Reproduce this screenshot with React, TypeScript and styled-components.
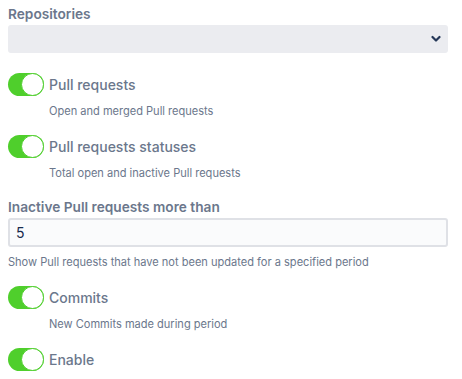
import React, { useState } from 'react';
import styled, { createGlobalStyle } from 'styled-components';

const GlobalStyle = createGlobalStyle`
  body {
    margin: 0;
    background: #ffffff;
    font-family: Inter, "Noto Sans", "Liberation Sans", sans-serif;
  }
`;

const Page = styled.div`
  display: flex;
  flex-direction: column;
  width: 440px;
  padding: 4px 8px 0;
`;

const FieldLabel = styled.label`
  display: block;
  height: 21px;
  font-size: 13.7px;
  line-height: 21px;
  font-weight: 600;
  color: #6b778c;
`;

const SelectBox = styled.div`
  position: relative;
  height: 28px;
  border-radius: 3px;
  background: #ebecf0;
  margin-bottom: 20px;
`;

const Chevron = styled.svg`
  position: absolute;
  right: 7px;
  top: 10px;
`;

const ToggleRow = styled.div`
  display: flex;
  align-items: center;
  gap: 5px;
  height: 23px;
`;

const Track = styled.button<{ on: boolean }>`
  position: relative;
  width: 36px;
  height: 23px;
  padding: 0;
  border: none;
  border-radius: 12px;
  background: ${({ on }) => (on ? '#4fcf2c' : '#c1c7d0')};
  cursor: pointer;
  flex-shrink: 0;
`;

const Knob = styled.span<{ on: boolean }>`
  position: absolute;
  top: 0;
  left: ${({ on }) => (on ? '13px' : '0')};
  width: 21px;
  height: 21px;
  border-radius: 50%;
  background: #ffffff;
  border: 1px solid ${({ on }) => (on ? '#4fcf2c' : '#c1c7d0')};
`;

const ToggleText = styled.span`
  font-size: 14px;
  font-weight: 500;
  color: #6b778c;
`;

const Description = styled.div<{ indent?: boolean }>`
  margin: 8px 0 0 ${({ indent }) => (indent ? '41px' : '0')};
  font-size: 11.05px;
  line-height: 14px;
  color: #6b778c;
`;

const Section = styled.div`
  margin-bottom: 17px;
`;

const TextInput = styled.input`
  box-sizing: border-box;
  width: 100%;
  height: 29px;
  padding: 0 6px;
  border: 2px solid #dfe1e6;
  border-radius: 3px;
  background: #fafbfc;
  font-family: inherit;
  font-size: 14px;
  color: #172b4d;
  outline: none;
`;

const Toggle: React.FC<{ label: string; description?: string }> = ({
  label,
  description,
}) => {
  const [on, setOn] = useState(true);
  return (
    <Section>
      <ToggleRow>
        <Track on={on} onClick={() => setOn(!on)}>
          <Knob on={on} />
        </Track>
        <ToggleText>{label}</ToggleText>
      </ToggleRow>
      {description && <Description indent>{description}</Description>}
    </Section>
  );
};

const App: React.FC = () => {
  const [days, setDays] = useState('5');
  return (
    <>
      <GlobalStyle />
      <Page>
        <FieldLabel>Repositories</FieldLabel>
        <SelectBox>
          <Chevron width="10" height="8" viewBox="0 0 10 8">
            <path
              d="M1.5 2 L5 5.5 L8.5 2"
              fill="none"
              stroke="#253858"
              strokeWidth="2.2"
              strokeLinecap="round"
              strokeLinejoin="round"
            />
          </Chevron>
        </SelectBox>
        <Toggle label="Pull requests" description="Open and merged Pull requests" />
        <Toggle
          label="Pull requests statuses"
          description="Total open and inactive Pull requests"
        />
        <Section>
          <FieldLabel>Inactive Pull requests more than</FieldLabel>
          <TextInput value={days} onChange={(e) => setDays(e.target.value)} />
          <Description>
            Show Pull requests that have not been updated for a specified period
          </Description>
        </Section>
        <Toggle label="Commits" description="New Commits made during period" />
        <Toggle label="Enable" />
      </Page>
    </>
  );
};

export default App;
